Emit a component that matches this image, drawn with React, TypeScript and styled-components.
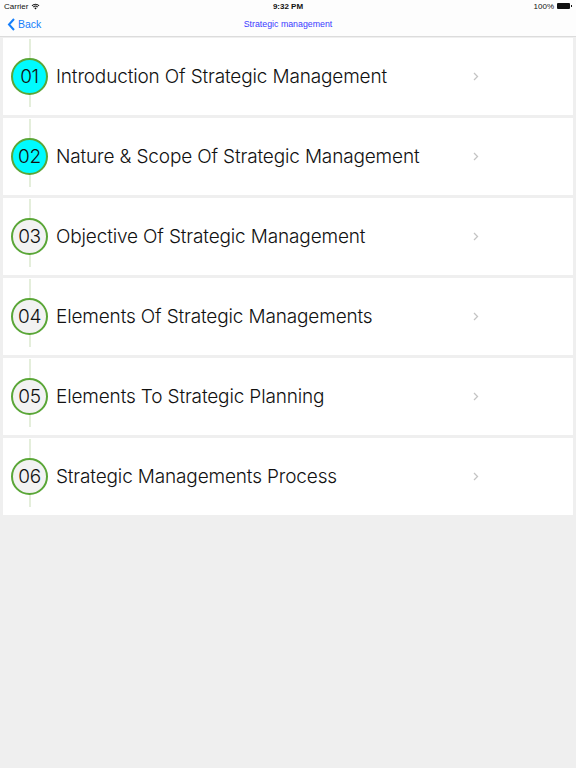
import React from "react";
import styled, { createGlobalStyle } from "styled-components";

const Global = createGlobalStyle`
  html, body { margin: 0; padding: 0; background: #efefef; }
  body { font-family: "Liberation Sans", Arial, sans-serif; }
  #root { min-height: 768px; background: #efefef; }
`;

const Header = styled.div`
  background: #fdfdfd;
  height: 36px;
  border-bottom: 1px solid #dcdcdc;
`;

const StatusBar = styled.div`
  height: 12px;
  display: grid;
  grid-template-columns: 1fr auto 1fr;
  align-items: center;
  padding: 0 4px;
  font-size: 8px;
  color: #111;
`;

const StatusLeft = styled.div`
  display: flex;
  align-items: center;
  gap: 3px;
`;

const StatusTime = styled.div`
  font-weight: bold;
  font-size: 8px;
`;

const StatusRight = styled.div`
  display: flex;
  justify-content: flex-end;
  align-items: center;
  gap: 3px;
`;

const Battery = styled.div`
  width: 13px;
  height: 6px;
  background: #111;
  border-radius: 1px;
  position: relative;
  margin-right: 2px;
  &::after {
    content: "";
    position: absolute;
    right: -2px;
    top: 2px;
    width: 1.5px;
    height: 2px;
    background: #111;
  }
`;

const NavBar = styled.div`
  height: 24px;
  display: grid;
  grid-template-columns: 1fr auto 1fr;
  align-items: center;
  padding: 0 7px;
`;

const BackButton = styled.div`
  display: flex;
  align-items: center;
  gap: 2px;
  color: #157efb;
  font-size: 10.5px;
`;

const Title = styled.div`
  color: #3b3bff;
  font-size: 8.8px;
`;

const List = styled.div`
  display: flex;
  flex-direction: column;
  gap: 3px;
  padding: 1px 3px 0 3px;
`;

const Card = styled.div`
  height: 77px;
  background: #ffffff;
  display: flex;
  align-items: center;
  position: relative;
`;

const Rail = styled.div`
  position: absolute;
  left: 26px;
  top: 1px;
  bottom: 8px;
  width: 1.5px;
  background: #e4eedb;
`;

const Badge = styled.div<{ $active: boolean }>`
  position: relative;
  margin-left: 8px;
  width: 33px;
  height: 33px;
  border-radius: 50%;
  border: 2.5px solid #5aa637;
  background: ${(p) => (p.$active ? "#00fbff" : "#f2f2f2")};
  display: flex;
  align-items: center;
  justify-content: center;
  font-family: "Inter", "Lato", sans-serif;
  font-size: 19px;
  font-weight: 300;
  color: #111;
  letter-spacing: -0.3px;
`;

const Label = styled.div`
  margin-left: 8px;
  font-family: "Inter", "Lato", sans-serif;
  font-size: 19px;
  font-weight: 300;
  letter-spacing: -0.15px;
  color: #111;
  flex: 1;
`;

const Chevron = styled.div`
  margin-right: 94px;
  display: flex;
  align-items: center;
`;

const items = [
  "Introduction Of Strategic Management",
  "Nature & Scope Of Strategic Management",
  "Objective Of Strategic Management",
  "Elements Of Strategic Managements",
  "Elements To Strategic Planning",
  "Strategic Managements Process",
];

export default function App() {
  return (
    <>
      <Global />
      <Header>
        <StatusBar>
          <StatusLeft>
            Carrier
            <svg width="9" height="7" viewBox="0 0 12 9">
              <path d="M6 8.5 L4.3 6.6 A2.5 2.5 0 0 1 7.7 6.6 Z" fill="#111" />
              <path d="M2.6 4.8 A4.8 4.8 0 0 1 9.4 4.8 L8.5 5.8 A3.5 3.5 0 0 0 3.5 5.8 Z" fill="#111" />
              <path d="M0.8 3 A7.3 7.3 0 0 1 11.2 3 L10.3 4 A6 6 0 0 0 1.7 4 Z" fill="#111" />
            </svg>
          </StatusLeft>
          <StatusTime>9:32 PM</StatusTime>
          <StatusRight>
            100%
            <Battery />
          </StatusRight>
        </StatusBar>
        <NavBar>
          <BackButton>
            <svg width="9" height="13" viewBox="0 0 9 13">
              <path d="M7 1 L2 6.5 L7 12" stroke="#157efb" strokeWidth="2" fill="none" />
            </svg>
            Back
          </BackButton>
          <Title>Strategic management</Title>
          <div />
        </NavBar>
      </Header>
      <List>
        {items.map((t, i) => (
          <Card key={i}>
            <Rail />
            <Badge $active={i < 2}>{String(i + 1).padStart(2, "0")}</Badge>
            <Label>{t}</Label>
            <Chevron>
              <svg width="6" height="9" viewBox="0 0 6 9">
                <path d="M1 1 L4.5 4.5 L1 8" stroke="#c4c4c4" strokeWidth="1.3" fill="none" />
              </svg>
            </Chevron>
          </Card>
        ))}
      </List>
    </>
  );
}
